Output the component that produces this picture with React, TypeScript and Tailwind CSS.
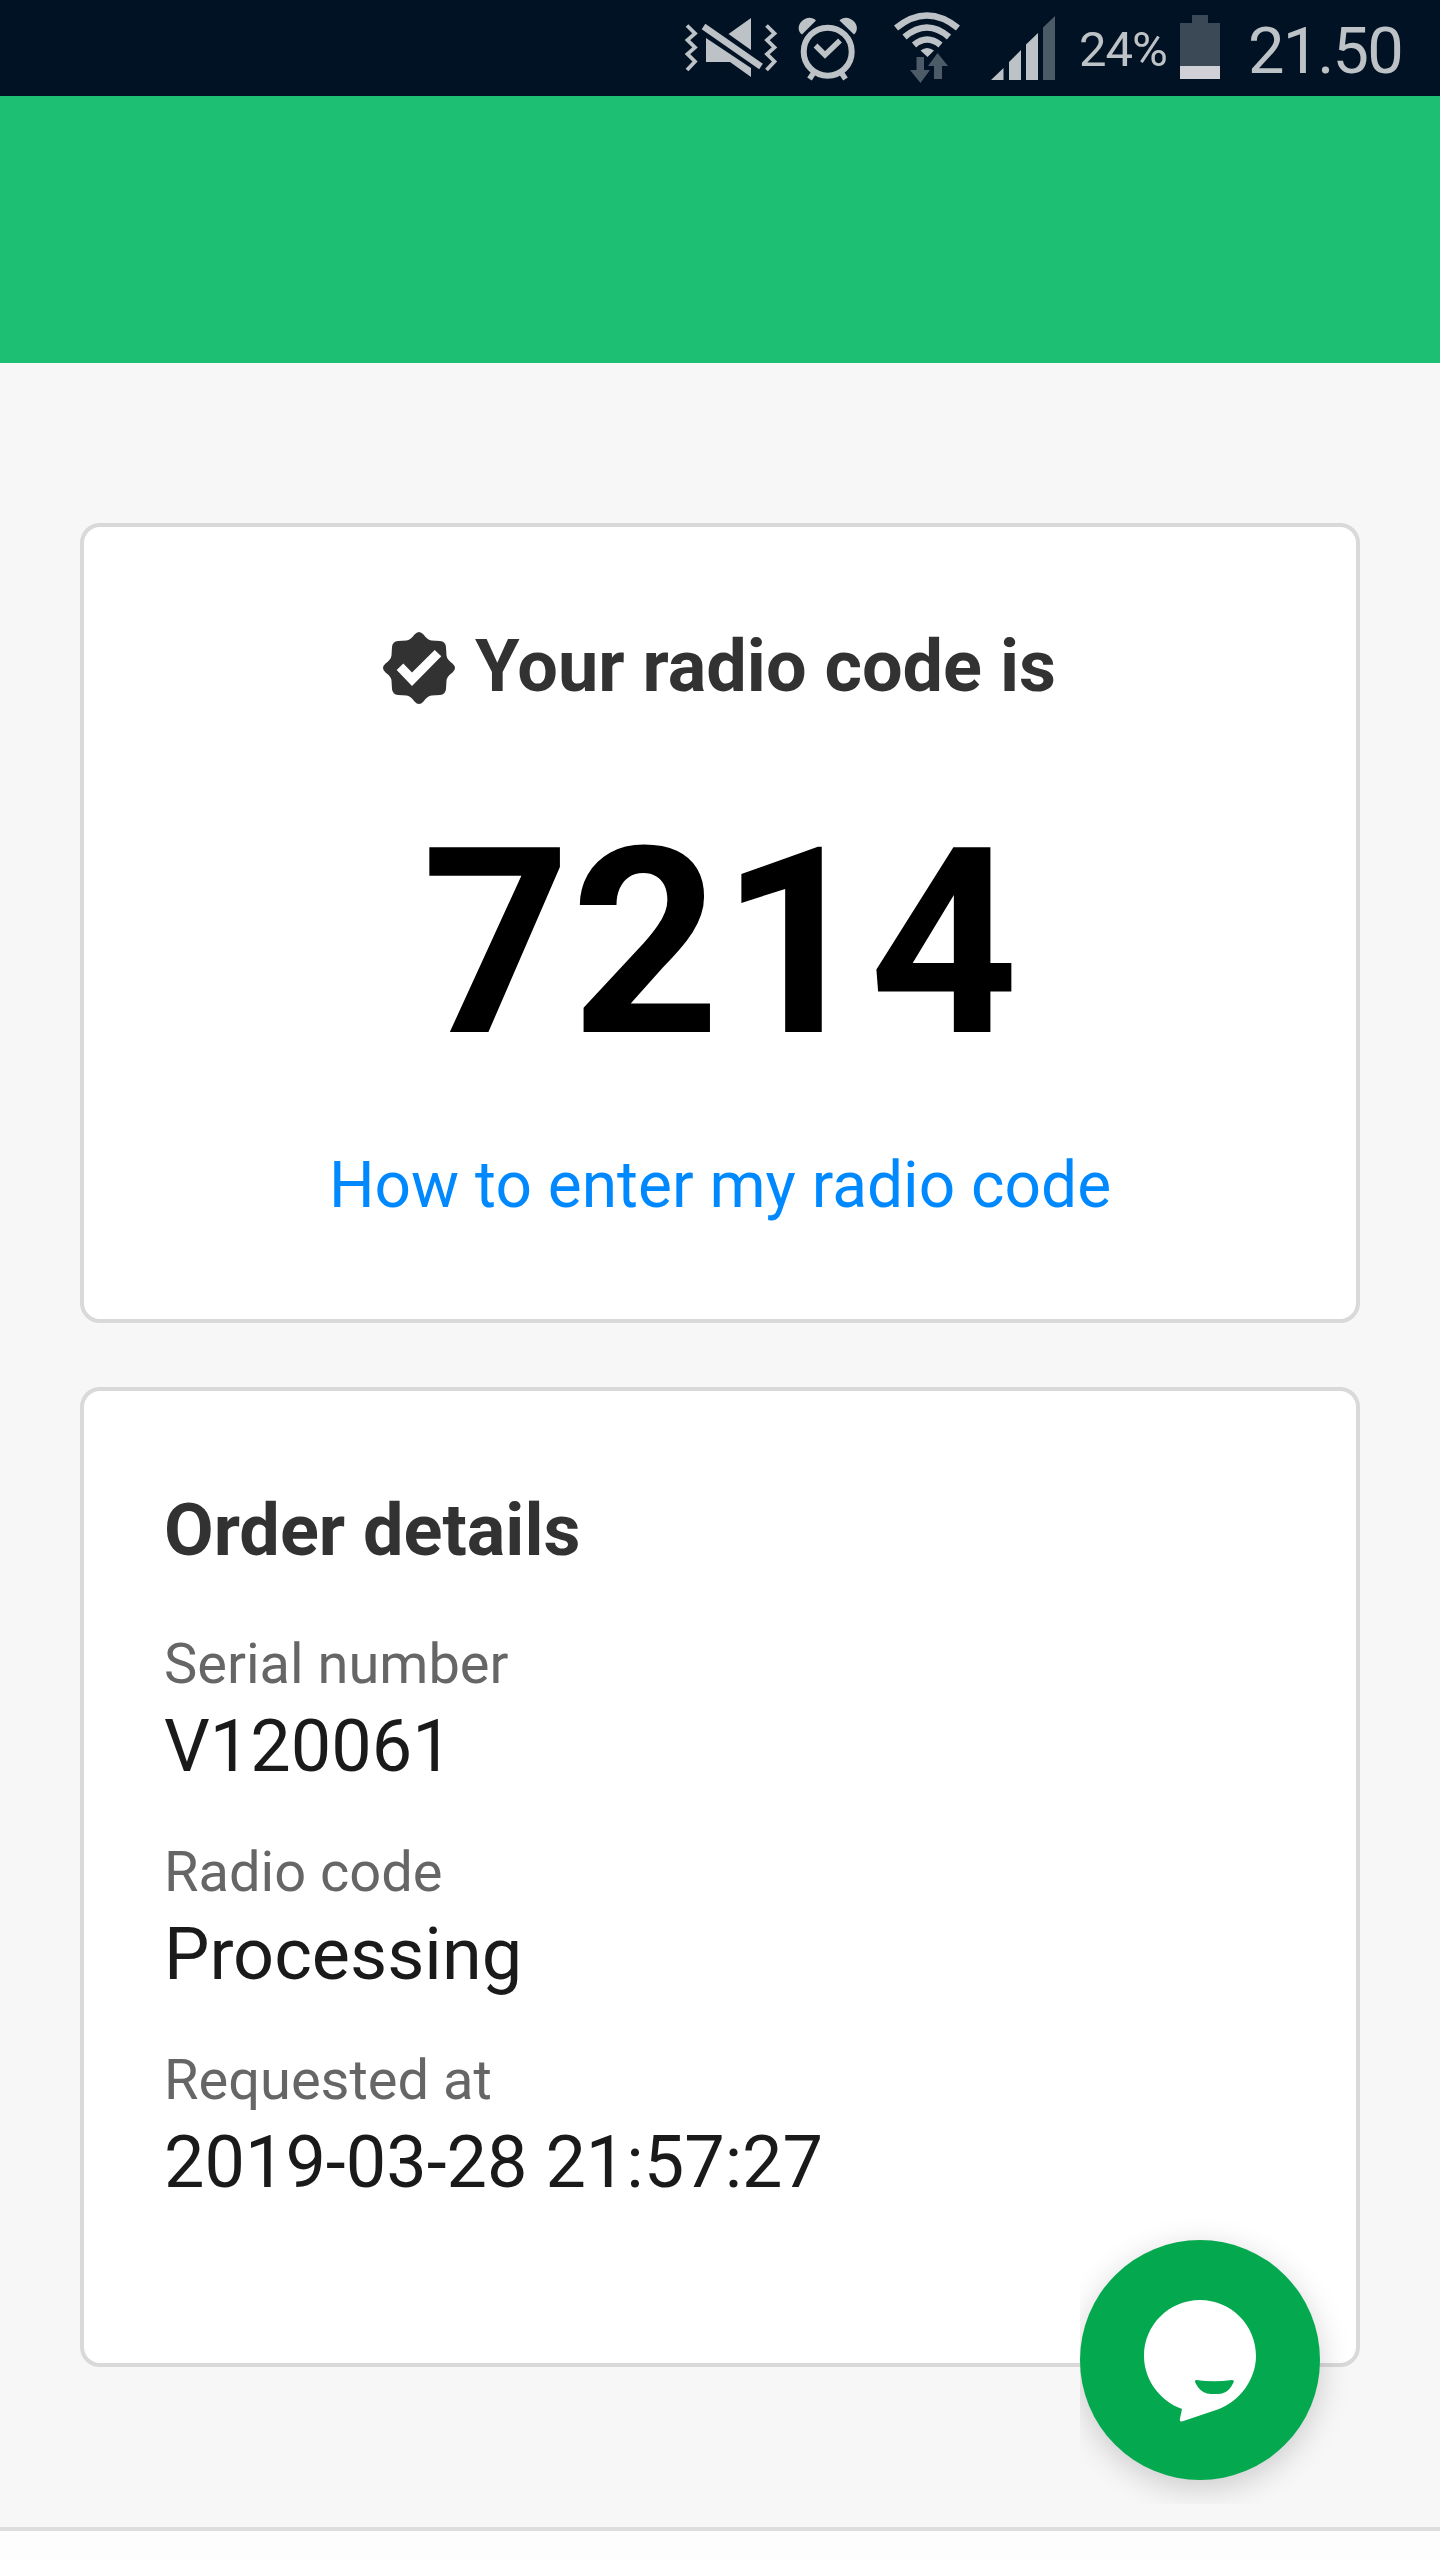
function StatusBar() {
  return (
    <div className="flex h-24 items-center bg-[#001223] pl-[684px] text-[#bdc2c7]">
      <svg className="h-24 w-[94px]" viewBox="684 0 94 96" fill="currentColor">
        <path d="M687 25.500L695 33.500L687.500 40L695 47.500L687.500 54L695 61.500L687 70M766.500 25.500L774.500 33.500L767 40L774.500 47.500L767 54L774.500 61.500L766.500 70" fill="none" stroke="currentColor" strokeWidth="3.800" />
        <path d="M751 18V50L728.500 34ZM706 38L751 68V77L730 62H706Z" />
        <path d="M703.500 26.500L761 66.500" fill="none" stroke="currentColor" strokeWidth="6.500" />
      </svg>
      <svg className="ml-5 h-24 w-[60px]" viewBox="798 0 60 96" fill="none" stroke="currentColor">
        <circle cx="827.700" cy="51.700" r="24" strokeWidth="6" />
        <path d="M815.500 45.500L825 55L840 40.500" strokeWidth="5.500" />
        <path d="M813.500 73L809.500 79M841.500 73L845.500 79" strokeWidth="5.500" />
        <path d="M802 34.500C798 32 797.500 26 801 22C805 17 812 16 816 20.500L802 34.500ZM854 34.500L839.500 20.500C843.500 16 850.500 17 854.500 22C858 26 857.500 32 854 34.500Z" fill="currentColor" stroke="none" />
      </svg>
      <svg className="ml-9 h-24 w-[66px]" viewBox="894 0 66 96" fill="none" stroke="currentColor" strokeWidth="6.500">
        <path d="M896 28Q927 3 958 28M904.500 37Q927 18 949 37M914 45Q927 34 940.500 45" />
        <path d="M920.500 50.500Q927 45.500 934 50.500L927.500 57Z" fill="currentColor" stroke="none" />
        <path d="M916.500 57H924V70H930L920.500 83L910 70H916.500ZM937.500 53L948 66H942V79H934V66H928Z" fill="#4d5a67" stroke="none" />
      </svg>
      <svg className="ml-[31px] h-24 w-16" viewBox="991 0 64 96" fill="currentColor">
        <path d="M991 80L1003.500 68V80ZM1009 80V62L1021 50V80ZM1026 80V44.500L1038 33V80Z" />
        <path d="M1043 80V27.500L1055 16V80Z" fill="#4d5a67" />
      </svg>
      <span className="mt-1 ml-6 w-[101px] text-[49px] tracking-[-1px]">24%</span>
      <svg className="h-24 w-10" viewBox="1180 0 40 96">
        <path d="M1192 15H1208V23H1220V66H1180V23H1192Z" fill="#3b4957" />
        <path d="M1180 66H1220V79H1180Z" fill="#cfd1d6" />
      </svg>
      <span className="mt-2 ml-7 text-[65px] tracking-[-1.9px]">21.50</span>
    </div>
  );
}

function BadgeIcon() {
  return (
    <svg className="mt-0.5 h-[72px] w-[72px] shrink-0" viewBox="0 0 72 72">
      <path
        d="M31.500 2.500Q36 -2.500 40.500 2.500Q44.500 8 48.500 8.500L57 9Q62.500 9.500 63 15L63.500 23.500Q64 27.500 69.500 31.500Q74.500 36 69.500 40.500Q64 44.500 63.500 48.500L63 57Q62.500 62.500 57 63L48.500 63.500Q44.500 64 40.500 69.500Q36 74.500 31.500 69.500Q27.500 64 23.500 63.500L15 63Q9.500 62.500 9 57L8.500 48.500Q8 44.500 2.500 40.500Q-2.500 36 2.500 31.500Q8 27.500 8.500 23.500L9 15Q9.500 9.500 15 9L23.500 8.500Q27.500 8 31.500 2.500Z"
        fill="#323232"
      />
      <path d="M13.700 38L29 54L58.300 24.300L51.700 18L29 40.500L20.300 31.500Z" fill="#fff" />
    </svg>
  );
}

function ChatButton() {
  // the wrapper cuts the shadow off at its left and bottom edges
  return (
    <div className="absolute top-[2200px] left-[1080px] h-[304px] w-[280px] overflow-hidden pt-10">
      <button
        type="button"
        aria-label="Chat"
        className="block h-[240px] w-[240px] rounded-full bg-[#04a84e] shadow-[0_8px_32px_rgba(0,0,0,0.18)]"
      >
        <svg className="h-full w-full" viewBox="0 0 240 240">
          <path
            d="M120 60C151 60 176 85 176 116C176 139 160 161 139 169L102 181.500Q99.500 182 99.800 179.500L102 169C80 161 64 140 64 116C64 85 89 60 120 60Z"
            fill="#fff"
          />
          <path d="M116 140Q134.500 142.500 152 140Q154.500 140 153.500 142.500Q149 152 142 153.500Q134.500 154.500 127 153.500Q120 152 115.200 142.500Q114.500 140 116 140Z" fill="#04a84e" />
        </svg>
      </button>
    </div>
  );
}

const details = [
  { label: 'Serial number', value: 'V120061' },
  { label: 'Radio code', value: 'Processing' },
  { label: 'Requested at', value: '2019-03-28 21:57:27' },
];

export default function App() {
  return (
    <div className="relative flex h-[2560px] w-[1440px] flex-col overflow-hidden bg-[#f7f7f7] font-[Roboto,sans-serif]">
      <StatusBar />
      <header className="h-[267px] bg-[#1dbf73]" />

      <main className="flex flex-1 flex-col gap-16 px-20 pt-40">
        <section className="flex h-[800px] flex-col items-center rounded-[20px] border-4 border-[#d9d9d9] bg-white pt-24">
          <div className="flex h-[88px] items-center gap-5 pr-px text-[72px] font-bold text-[#323232]">
            <BadgeIcon />
            <h1>Your radio code is</h1>
          </div>
          <p className="mt-[82px] text-[260px] leading-[300px] font-bold text-black">7214</p>
          <a href="#" className="mt-[45px] text-[64px] leading-[96px] text-[#0089ff]">How to enter my radio code</a>
        </section>

        <section className="h-[980px] rounded-[20px] border-4 border-[#d9d9d9] bg-white px-20 pt-24">
          <h2 className="text-[72px] leading-[88px] font-bold text-[#323232]">Order details</h2>
          <dl className="mt-12">
            {details.map((item) => (
              <div key={item.label} className="mb-[42px]">
                <dt className="text-[56px] leading-[82px] text-[#666]">{item.label}</dt>
                <dd className="text-[72px] leading-[84px] text-[#1a1a1a]">{item.value}</dd>
              </div>
            ))}
          </dl>
        </section>
      </main>

      <footer className="h-[33px] border-t-4 border-[#dedede] bg-[#fdfdfd]" />
      <ChatButton />
    </div>
  );
}
